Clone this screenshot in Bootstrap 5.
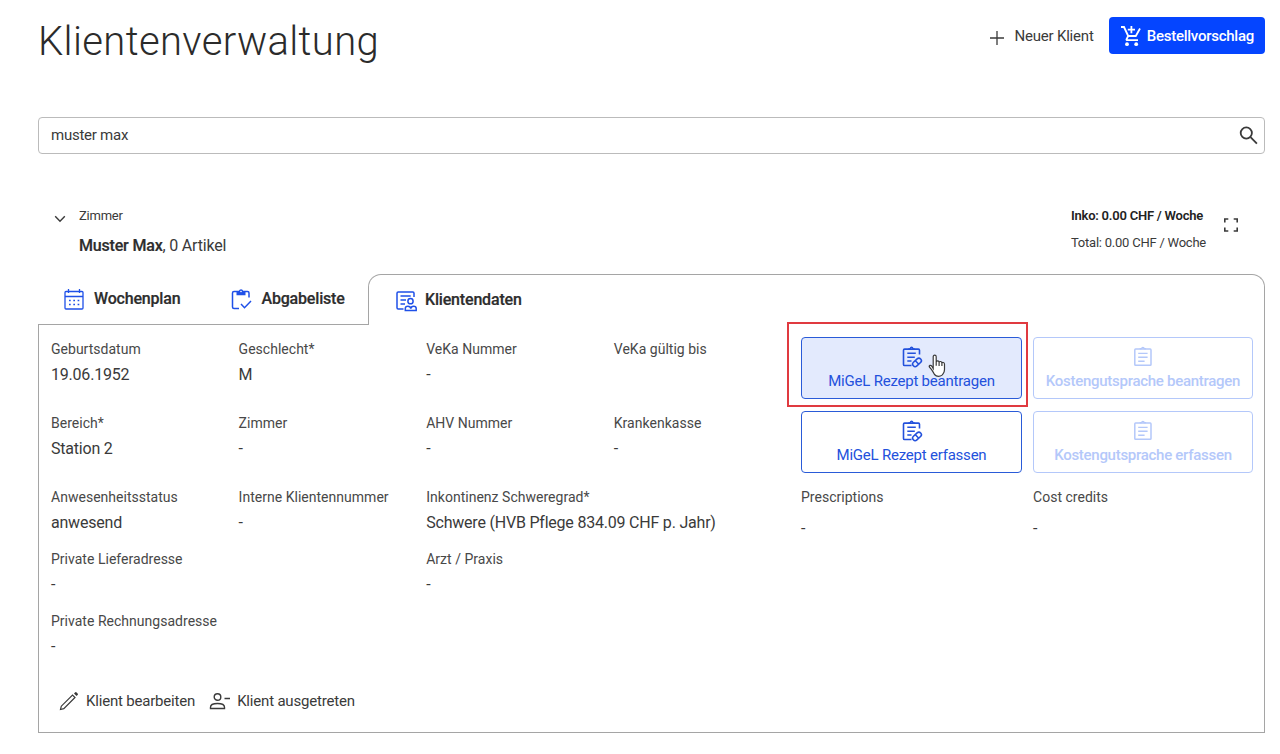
<!DOCTYPE html>
<html lang="de">
<head>
<meta charset="utf-8">
<title>Klientenverwaltung</title>
<meta name="viewport" content="width=device-width, initial-scale=1">
<link rel="stylesheet" href="https://cdn.jsdelivr.net/npm/bootstrap@5.3.0/dist/css/bootstrap.min.css">
<style>
body{font-family:Roboto,"Liberation Sans",sans-serif;font-size:15px;line-height:20px;letter-spacing:-.2px;color:#3a3a3a;background:#fff}
svg{display:block;flex:none;fill:none;stroke:currentColor}
.page{padding:17px 15px 0 38px}
.topbar{height:100px}
.title{font-size:40px;font-weight:300;line-height:50px;letter-spacing:.36px;margin:0;color:#2b2b2b}
.cta{background:#0545ff;color:#fff;height:37px;border-radius:4px;font-size:15px;font-weight:500;padding:1px 11px 0;letter-spacing:-.25px;margin-left:15px}
.cta:hover{background:#0545ff;color:#fff}
.flat{color:#3a3a3a;font-size:15px;padding:0;border:0;letter-spacing:-.19px}
.searchbox{height:37px;border:1px solid #bbb;border-radius:4px;padding:0 6px 0 12px;background:#fff}
.searchbox input{border:0;padding:0;font-size:15px;letter-spacing:-.25px;color:#3a3a3a;background:none;box-shadow:none!important}
.client{height:120px;padding:52px 16px 0 16px}
.fs13{font-size:13px;letter-spacing:-.23px}
.fs16{font-size:16px}
.idle-tabs{width:330px;height:51px;border-bottom:1px solid #a5a5a5;padding-left:26px}
.live-tab{height:51px;border:1px solid #a5a5a5;border-bottom:0;border-radius:13px 13px 0 0;padding:0 0 1px 27px}
.tabtext{font-size:16px;font-weight:500;-webkit-text-stroke:.2px;letter-spacing:-.18px;color:#2d2d2d}
.blue{color:#1f50e8}
.panel{height:408px;border:1px solid #a5a5a5;border-top:0;padding:12px 12px 0}
.facts{width:750px;display:grid;grid-template-columns:repeat(4,187.6px);grid-template-rows:74px 74px 62px 62px 62px}
.facts>div{padding-top:2px}
.wide{grid-column:span 2}
.term{font-size:14px;line-height:20px;letter-spacing:.02px;color:#484848;white-space:nowrap}
.value{font-size:16px;line-height:20px;letter-spacing:-.21px;margin-top:6px;color:#3a3a3a;white-space:nowrap}
.actions{display:grid;grid-template-columns:221px 220px;gap:12px 11px;align-content:start}
.act{height:62px;border:1px solid #2a5bd8;border-radius:4px;color:#2351dc;font-size:15px;padding:0;line-height:20px;letter-spacing:-.22px;white-space:nowrap}
.act svg{margin:0 auto 3px}
.act.hovered{background:#e3eafd}
.act:disabled{border-color:#b4c8fa;color:#b4c8fa;opacity:1;font-weight:500;letter-spacing:-.28px}
.marker{position:absolute;left:-14px;top:-15px;width:241px;height:85px;border:2px solid #e03a40}
.pointer{position:absolute;left:127px;top:17px}
</style>
</head>
<body>
<svg width="0" height="0" class="position-absolute">
 <symbol id="rx" viewBox="0 0 22 22"><path d="M10.500 19.500H3.600q-1.100 0-1.100-1.100V4.200q0-1.100 1.100-1.100H17.400q1.100 0 1.100 1.100V8.500" stroke-width="1.600"/><path d="M7.500 3.400Q8 2.800 9.300 2.700q.3-1.400 1.300-1.400t1.300 1.400q1.300.1 1.800.7" stroke-width="1.500"/><path d="M6.300 7.300h8.500M6.300 11.200h7.500M6.300 15h4.200" stroke-width="1.500"/><g transform="rotate(-43 16 16.400)"><rect x="11" y="13.900" width="10" height="5" rx="2.500" stroke-width="1.600"/><path d="M16 14v5" stroke-width="1.500"/></g></symbol>
 <symbol id="doc" viewBox="0 0 22 22"><rect x="2.800" y="3.100" width="16.200" height="16.200" rx=".8" stroke-width="1.500"/><path d="M7.800 3Q8.300 2.600 9.600 2.500q.3-1 1.300-1t1.300 1q1.300.1 1.800.5" stroke-width="1.400"/><path d="M6.200 7.400h9.400M6.200 11.300h9.400M6.200 15.200h6.400" stroke-width="1.400"/></symbol>
</svg>
<main class="page">
 <header class="topbar d-flex justify-content-between align-items-start">
  <h1 class="title">Klientenverwaltung</h1>
  <div class="d-flex align-items-center">
   <button class="btn flat d-flex align-items-center pt-1"><svg width="14" height="14" viewBox="0 0 14 14" stroke-width="1.300"><path d="M7 0v14M0 7h14"/></svg><span style="margin-left:10px;margin-top:-2px">Neuer Klient</span></button>
   <button class="btn cta border-0 d-flex align-items-center"><svg width="22" height="22" viewBox="0 0 22 22" stroke-width="1.800"><path d="M1 2h3l4.200 9h7.600l4.200-7.500M8.200 11l-1.700 3.300q-.2.800.7.800H18M11.400 1v7.200M7.800 4.600H15"/><circle cx="7" cy="19.200" r="1.900" fill="currentColor" stroke="none"/><circle cx="16.200" cy="19.200" r="1.900" fill="currentColor" stroke="none"/></svg><span style="margin-left:5px">Bestellvorschlag</span></button>
  </div>
 </header>
 <div class="searchbox d-flex align-items-center">
  <input class="form-control" value="muster max" aria-label="Suche">
  <svg width="20" height="20" viewBox="0 0 20 20" stroke="#111" stroke-width="1.800"><circle cx="8.300" cy="7" r="5.600"/><path d="M12.500 11.200l6.400 6.400"/></svg>
 </div>
 <section class="client d-flex justify-content-between">
  <div class="d-flex">
   <svg width="12" height="8" viewBox="0 0 12 8" stroke-width="1.400" style="margin-top:9px"><path d="M1.200 1.200L6 6.200l4.800-5"/></svg>
   <div style="margin-left:13px"><div class="fs13">Zimmer</div><div class="fs16" style="margin-top:10px"><b class="tabtext">Muster Max</b>, 0 Artikel</div></div>
  </div>
  <div class="d-flex fs13">
   <div><div style="font-weight:600;color:#222">Inko: 0.00 CHF / Woche</div><div style="margin-top:7px">Total: 0.00 CHF / Woche</div></div>
   <svg width="16" height="16" viewBox="0 0 16 16" stroke-width="1.600" style="margin:11px 10px 0 17px"><path d="M1.800 5.500V2h3.500M10.700 2h3.500v3.500M14.200 10.500V14h-3.500M5.300 14H1.800v-3.500"/></svg>
  </div>
 </section>
 <div class="d-flex">
  <div class="idle-tabs d-flex align-items-center">
   <svg class="blue" width="20" height="21" viewBox="0 0 20 21" stroke-width="1.300"><rect x="1" y="2.500" width="18" height="17.500" rx="1"/><path d="M1 7.500h18M4.500 0v4M15.500 0v4"/><path d="M5 11.500h11M5 15.500h11" stroke-width="1.700" stroke-dasharray="1.700 2.600"/></svg>
   <span class="tabtext" style="margin-left:10px">Wochenplan</span>
   <svg class="blue" width="21" height="21" viewBox="0 0 21 21" stroke-width="1.500" style="margin-left:51px"><path d="M8 19.500H3q-1.500 0-1.500-1.500V4Q1.500 2.500 3 2.500h13.500q1.500 0 1.500 1.500v4.500M10 15l3.500 3.700 6.500-6.700"/><path d="M5.500 2h2.400a2.200 2.200 0 0 1 4.300 0h2.300v4.200h-9z" fill="currentColor" stroke="none"/><circle cx="10" cy="2.500" r=".8" fill="#fff" stroke="none"/></svg>
   <span class="tabtext" style="margin-left:9px">Abgabeliste</span>
  </div>
  <div class="live-tab flex-grow-1 d-flex align-items-center">
   <svg class="blue" width="21" height="22" viewBox="0 0 21 22" stroke-width="1.500" style="margin-top:2px"><path d="M7.500 19H2.200Q1 19 1 17.800V3.200Q1 2 2.200 2h14.600Q18 2 18 3.200V7M4.500 6h10.200M4.500 10h5.500M4.500 14h4.500"/><circle cx="14.500" cy="11.200" r="2.600"/><path d="M9.300 20.500v-2q0-2.200 2.600-2.200 2.600 0 2.900 2.300.3-2.300 2.800-2.300 2.600 0 2.600 2.200v2z"/></svg>
   <span class="tabtext" style="margin-left:8px">Klientendaten</span>
  </div>
 </div>
 <section class="panel d-flex flex-column">
  <div class="d-flex">
   <div class="facts">
    <div><div class="term">Geburtsdatum</div><div class="value">19.06.1952</div></div>
    <div><div class="term">Geschlecht*</div><div class="value">M</div></div>
    <div><div class="term">VeKa Nummer</div><div class="value">-</div></div>
    <div><div class="term">VeKa gültig bis</div></div>
    <div><div class="term">Bereich*</div><div class="value">Station 2</div></div>
    <div><div class="term">Zimmer</div><div class="value">-</div></div>
    <div><div class="term">AHV Nummer</div><div class="value">-</div></div>
    <div><div class="term">Krankenkasse</div><div class="value">-</div></div>
    <div><div class="term">Anwesenheitsstatus</div><div class="value">anwesend</div></div>
    <div><div class="term">Interne Klientennummer</div><div class="value">-</div></div>
    <div class="wide"><div class="term">Inkontinenz Schweregrad*</div><div class="value">Schwere (HVB Pflege 834.09 CHF p. Jahr)</div></div>
    <div class="wide"><div class="term">Private Lieferadresse</div><div class="value">-</div></div>
    <div class="wide"><div class="term">Arzt / Praxis</div><div class="value">-</div></div>
    <div class="wide"><div class="term">Private Rechnungsadresse</div><div class="value">-</div></div>
   </div>
   <div class="actions">
    <div class="position-relative"><button class="btn act hovered w-100"><svg width="22" height="22"><use href="#rx"/></svg>MiGeL Rezept beantragen</button><div class="marker"></div>
     <svg class="pointer" width="19" height="24" viewBox="0 0 19 24" stroke="#111" stroke-width="1.200"><path d="M5.200 14.500V2.800q0-1.700 1.500-1.700t1.500 1.700v5q.3-1 1.500-1 1.300 0 1.400 1.400.4-.8 1.400-.7 1.200.1 1.400 1.500.5-.7 1.400-.5 1.200.3 1.200 1.700v5.200q0 2.500-1.500 4.500l-1 1.200q-1.500 1.200-3.500 1.200-2.500 0-4-1.800Q5.500 18.500 3.600 15.600L1.500 13.200q-.7-1.200.3-1.800 1-.4 1.900.6zM8.200 7.800v4M11.100 8.200v3.800M13.900 9v3" fill="#fff"/></svg></div>
    <div><button class="btn act w-100" disabled><svg width="22" height="22"><use href="#doc"/></svg>Kostengutsprache beantragen</button></div>
    <div><button class="btn act w-100"><svg width="22" height="22"><use href="#rx"/></svg>MiGeL Rezept erfassen</button></div>
    <div><button class="btn act w-100" disabled><svg width="22" height="22"><use href="#doc"/></svg>Kostengutsprache erfassen</button></div>
    <div style="padding-top:2px"><div class="term">Prescriptions</div><div class="value" style="margin-top:12px">-</div></div>
    <div style="padding-top:2px"><div class="term">Cost credits</div><div class="value" style="margin-top:12px">-</div></div>
   </div>
  </div>
  <div class="d-flex align-items-center" style="margin:19px 0 0 8px">
   <button class="btn flat d-flex align-items-center"><svg width="20" height="20" viewBox="0 0 20 20" stroke-width="1.200"><path d="M1.500 18.500l.8-3.300L13.500 4l2.500 2.500L4.800 17.700z"/><path d="M15 2.500l1.300-1.300q.5-.4 1 0l1.500 1.500q.4.500 0 1L17.500 5z" fill="currentColor" stroke="none"/></svg><span style="margin-left:7px">Klient bearbeiten</span></button>
   <button class="btn flat d-flex align-items-center" style="margin-left:14px"><svg width="22" height="18" viewBox="0 0 22 18" stroke-width="1.400"><circle cx="8.500" cy="5" r="3.300"/><path d="M1.500 16.500v-1.300q0-3.700 7-3.700t7 3.700v1.300zM15.500 6.500H21"/></svg><span style="margin-left:6px">Klient ausgetreten</span></button>
  </div>
 </section>
</main>
<script src="https://cdn.jsdelivr.net/npm/bootstrap@5.3.0/dist/js/bootstrap.bundle.min.js"></script>
</body>
</html>
